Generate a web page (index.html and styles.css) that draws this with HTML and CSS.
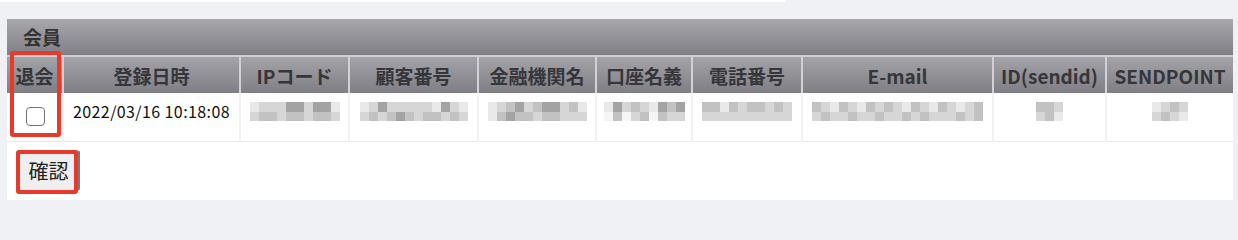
FILE: index.html
```html
<!DOCTYPE html>
<html lang="ja">
<head>
<meta charset="utf-8">
<title>会員</title>
<link rel="stylesheet" href="styles.css">
</head>
<body>
<div class="topstrip"></div>
<div class="panel">
  <div class="title">会員</div>
  <table class="grid">
    <colgroup>
      <col class="c1"><col class="c2"><col class="c3"><col class="c4"><col class="c5">
      <col class="c6"><col class="c7"><col class="c8"><col class="c9"><col class="c10">
    </colgroup>
    <thead>
      <tr>
        <th>退会</th><th>登録日時</th><th>IPコード</th><th>顧客番号</th><th>金融機関名</th>
        <th>口座名義</th><th>電話番号</th><th>E-mail</th><th>ID(sendid)</th><th>SENDPOINT</th>
      </tr>
    </thead>
    <tbody>
      <tr>
        <td><input type="checkbox" class="chk"></td>
        <td class="date">2022/03/16 10:18:08</td>
        <td><span class="blur"><i class="a"></i><i class="b"></i><i class="b"></i><i class="c"></i><i class="b"></i><i class="c"></i><i class="b"></i><i class="b"></i><i class="d"></i><i class="c"></i><i class="d"></i><i class="c"></i><i class="b"></i><i class="b"></i><i class="d"></i><i class="c"></i><i class="d"></i><i class="c"></i><i class="a"></i><i class="b"></i></span></td>
        <td><span class="blur"><i class="a"></i><i class="b"></i><i class="b"></i><i class="c"></i><i class="d"></i><i class="b"></i><i class="b"></i><i class="c"></i><i class="b"></i><i class="d"></i><i class="b"></i><i class="c"></i><i class="b"></i><i class="b"></i><i class="b"></i><i class="c"></i><i class="a"></i><i class="c"></i><i class="d"></i><i class="b"></i><i class="b"></i><i class="c"></i><i class="a"></i><i class="b"></i></span></td>
        <td><span class="blur"><i class="a"></i><i class="a"></i><i class="b"></i><i class="c"></i><i class="c"></i><i class="d"></i><i class="d"></i><i class="c"></i><i class="b"></i><i class="c"></i><i class="c"></i><i class="b"></i><i class="d"></i><i class="c"></i><i class="d"></i><i class="c"></i><i class="b"></i><i class="b"></i><i class="c"></i><i class="b"></i><i class="a"></i><i class="b"></i></span></td>
        <td><span class="blur"><i class="a"></i><i class="w"></i><i class="d"></i><i class="c"></i><i class="b"></i><i class="w"></i><i class="c"></i><i class="b"></i><i class="b"></i><i class="c"></i><i class="a"></i><i class="w"></i><i class="d"></i><i class="c"></i><i class="c"></i><i class="b"></i><i class="d"></i><i class="b"></i></span></td>
        <td><span class="blur"><i class="c"></i><i class="b"></i><i class="c"></i><i class="b"></i><i class="a"></i><i class="b"></i><i class="c"></i><i class="b"></i><i class="b"></i><i class="b"></i><i class="c"></i><i class="b"></i><i class="c"></i><i class="b"></i><i class="b"></i><i class="b"></i><i class="c"></i><i class="b"></i><i class="b"></i><i class="b"></i></span></td>
        <td><span class="blur"><i class="c"></i><i class="b"></i><i class="b"></i><i class="c"></i><i class="a"></i><i class="b"></i><i class="c"></i><i class="b"></i><i class="b"></i><i class="c"></i><i class="a"></i><i class="b"></i><i class="c"></i><i class="b"></i><i class="b"></i><i class="c"></i><i class="c"></i><i class="b"></i><i class="b"></i><i class="b"></i><i class="a"></i><i class="c"></i><i class="c"></i><i class="b"></i><i class="b"></i><i class="c"></i><i class="a"></i><i class="b"></i><i class="c"></i><i class="b"></i><i class="b"></i><i class="b"></i><i class="a"></i><i class="c"></i><i class="b"></i><i class="b"></i><i class="c"></i><i class="c"></i></span></td>
        <td><span class="blur"><i class="c"></i><i class="b"></i><i class="c"></i><i class="c"></i><i class="b"></i><i class="a"></i></span></td>
        <td><span class="blur"><i class="a"></i><i class="b"></i><i class="b"></i><i class="c"></i><i class="c"></i><i class="b"></i><i class="b"></i><i class="a"></i></span></td>
      </tr>
    </tbody>
  </table>
  <div class="actions">
    <button class="btn" type="button">確認</button>
  </div>
  <div class="mark mark-col"></div>
  <div class="mark mark-btn"></div>
</div>
</body>
</html>
```

FILE: styles.css
```css
html, body {
  margin: 0;
  padding: 0;
}
body {
  background: #eff1f5;
  width: 1238px;
  height: 206px;
  overflow: hidden;
  font-family: "Noto Sans CJK JP", "Noto Sans", sans-serif;
  color: #222;
}
.topstrip {
  width: 785px;
  height: 2px;
  background: #ffffff;
}
.panel {
  position: relative;
  margin: 17px 0 0 7px;
  width: 1226px;
  height: 181px;
  background: #ffffff;
}
.title {
  height: 36px;
  line-height: 36px;
  padding-left: 16px;
  font-size: 19px;
  font-weight: bold;
  color: #333;
  background: linear-gradient(#a7a7ac, #7f7f85);
  border-bottom: 2px solid #cfcfd3;
}
.grid {
  width: 1226px;
  border-collapse: collapse;
  table-layout: fixed;
}
.c1 { width: 56px; }
.c2 { width: 177px; }
.c3 { width: 109px; }
.c4 { width: 129px; }
.c5 { width: 118px; }
.c6 { width: 96px; }
.c7 { width: 110px; }
.c8 { width: 191px; }
.c9 { width: 113px; }
.c10 { width: 127px; }
.grid th {
  height: 36px;
  padding: 0;
  font-size: 19px;
  font-weight: bold;
  color: #36363a;
  text-align: center;
  white-space: nowrap;
  overflow: hidden;
  background: linear-gradient(#a3a3a8, #7e7e84);
  border-left: 2px solid #d2d2d6;
}
.grid th:first-child,
.grid td:first-child {
  border-left: none;
}
.grid td {
  height: 48px;
  padding: 8px 0 0;
  vertical-align: top;
  text-align: center;
  line-height: 20px;
  border-left: 2px solid #f1f2f5;
  border-bottom: 1px solid #e6e8ee;
  box-sizing: border-box;
}
.date {
  font-size: 16px;
  letter-spacing: 0.4px;
  color: #111;
  white-space: nowrap;
}
.chk {
  appearance: none;
  -webkit-appearance: none;
  width: 19px;
  height: 19px;
  margin: 6px 0 0 2px;
  border: 1.5px solid #737373;
  border-radius: 4px;
  background: #fff;
  box-sizing: border-box;
  vertical-align: top;
}
.blur {
  display: inline-grid;
  grid-template-rows: 10px 9px;
  grid-auto-flow: column;
  grid-auto-columns: 9px;
  margin-top: 1px;
  vertical-align: top;
}
.blur i { display: block; }
.blur .w { background: #f6f6f6; }
.blur .a { background: #e9e9e9; }
.blur .b { background: #d6d6d6; }
.blur .c { background: #c2c2c2; }
.blur .d { background: #a3a3a3; }
.actions {
  padding: 8px 0 0 11px;
}
.btn {
  width: 62px;
  height: 41px;
  padding: 0;
  font-family: "Noto Sans CJK JP", sans-serif;
  font-size: 20px;
  color: #222;
  background: #efefef;
  border: 1px solid #b5b5b5;
  border-right: 2px solid #7a7a7a;
  border-radius: 3px;
}
.mark {
  position: absolute;
  border: 4px solid #e8392b;
  border-radius: 3px;
  box-sizing: border-box;
}
.mark-col {
  left: 3px;
  top: 32px;
  width: 51px;
  height: 86px;
}
.mark-btn {
  left: 9px;
  top: 131px;
  width: 62px;
  height: 44px;
}
```
